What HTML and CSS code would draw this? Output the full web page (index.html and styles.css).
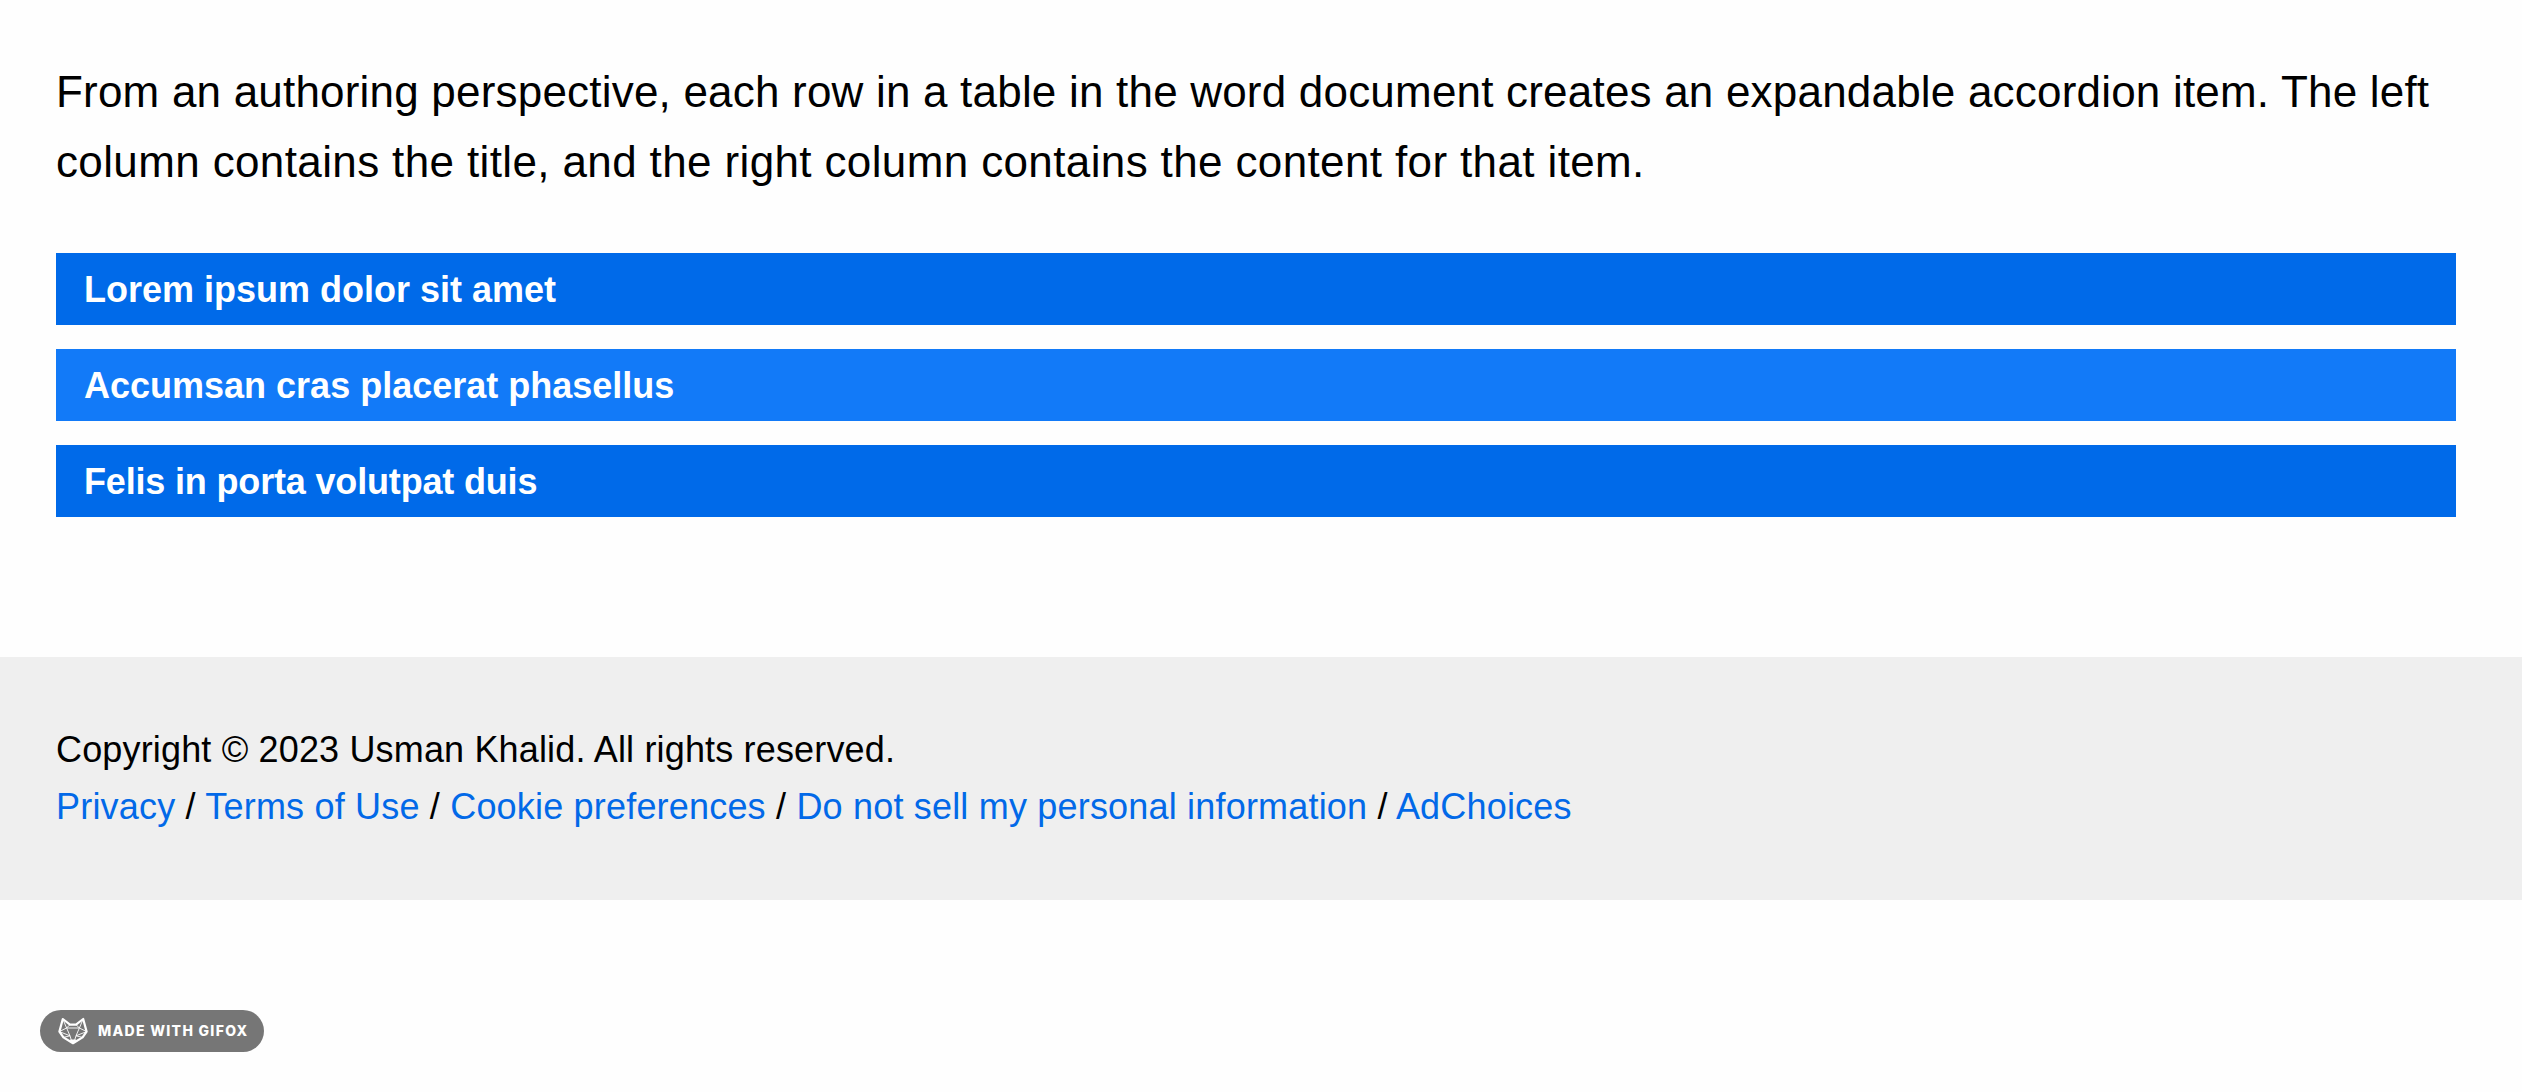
FILE: index.html
```html
<!DOCTYPE html>
<html lang="en">
<head>
<meta charset="utf-8">
<title>Accordion</title>
<link rel="stylesheet" href="styles.css">
</head>
<body>
<main class="content">
  <p class="intro"><span class="intro-first">From an authoring perspective, each row in a table in the word document creates an expandable accordion item. The left</span><br><span class="intro-second">column contains the title, and the right column contains the content for that item.</span></p>
  <div class="accordion">
    <button class="item" type="button">Lorem ipsum dolor sit amet</button>
    <button class="item item-hover" type="button">Accumsan cras placerat phasellus</button>
    <button class="item item-tight" type="button">Felis in porta volutpat duis</button>
  </div>
</main>
<footer class="footer">
  <div class="copyright">Copyright © 2023 Usman Khalid. All rights reserved.</div>
  <div class="links"><a href="#">Privacy</a> / <a href="#">Terms of Use</a> / <a href="#">Cookie preferences</a> / <a href="#">Do not sell my personal information</a> / <a href="#">AdChoices</a></div>
</footer>
<div class="badge">
  <svg class="fox" viewBox="0 0 30 28" aria-hidden="true">
    <path class="outline" d="M4.8 2 12 7.6H18L25.2 2 28.6 14.6 24.6 20.4 15 26.2 5.4 20.4 1.4 14.6Z"/>
    <path class="facets" d="M4.8 2 8.6 11 1.4 14.6 12 18.8 8.6 11H21.4L18 18.8 28.6 14.6 21.4 11 25.2 2M12 7.6 8.6 11M18 7.6 21.4 11M12 18.8 5.4 20.4M18 18.8 24.6 20.4M12 18.8 13.6 24M18 18.8 16.4 24"/>
    <path class="nose" d="M12.2 23H17.8L15 26Z"/>
  </svg>
  <span class="badge-text">MADE WITH GIFOX</span>
</div>
</body>
</html>
```
FILE: styles.css
```css
body {
  margin: 0;
  background: #fefefe;
  color: #000;
  font-family: "Liberation Sans", Arial, sans-serif;
}
.content {
  padding: 57px 66px 140px 56px;
}
.intro {
  margin: 0 0 55px;
  font-size: 44px;
  line-height: 70.4px;
  white-space: nowrap;
}
.intro-first {
  letter-spacing: 0.2px;
}
.intro-second {
  letter-spacing: 0.37px;
}
.accordion {
  display: flex;
  flex-direction: column;
  gap: 24px;
}
.item {
  height: 72px;
  padding: 1px 28px 0;
  border: 0;
  background: #006ae9;
  color: #fff;
  font: bold 36px/71px "Liberation Sans", Arial, sans-serif;
  text-align: left;
}
.item-hover {
  background: #127af8;
}
.item-tight {
  letter-spacing: -0.17px;
}
.footer {
  padding: 64px 56px;
  background: #efefef;
  font-size: 36px;
  line-height: 57.6px;
  white-space: nowrap;
}
.copyright {
  letter-spacing: 0.16px;
}
.links {
  letter-spacing: 0.19px;
}
.footer a {
  color: #0269e8;
  text-decoration: none;
}
.badge {
  display: flex;
  align-items: center;
  box-sizing: border-box;
  width: 224px;
  height: 42px;
  margin: 110px 0 0 40px;
  padding-left: 18px;
  border-radius: 21px;
  background: #767676;
  color: #fff;
}
.fox {
  width: 30px;
  height: 28px;
  fill: none;
  stroke: #fff;
  stroke-linejoin: round;
}
.outline {
  stroke-width: 2.2;
}
.facets {
  stroke-width: 0.9;
}
.nose {
  fill: #fff;
}
.badge-text {
  margin-left: 10px;
  font: 800 14px/20px Inter, sans-serif;
  letter-spacing: 1.3px;
  white-space: nowrap;
}
```
